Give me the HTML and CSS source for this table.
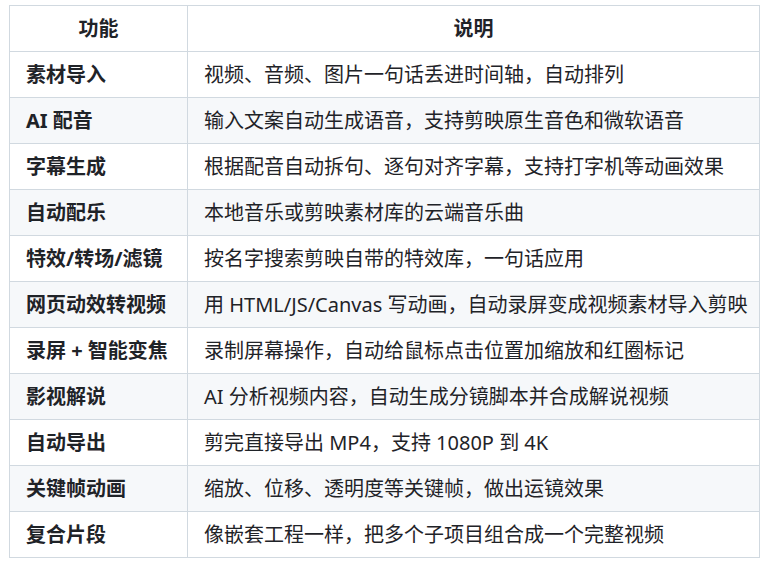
FILE: index.html
```html
<!DOCTYPE html>
<html lang="zh-CN">
<head>
<meta charset="utf-8">
<link rel="stylesheet" href="styles.css">
</head>
<body>
<table class="feature-table">
  <colgroup><col class="col-name"><col class="col-desc"></colgroup>
  <thead>
    <tr><th>功能</th><th>说明</th></tr>
  </thead>
  <tbody>
    <tr><td class="name">素材导入</td><td>视频、音频、图片一句话丢进时间轴，自动排列</td></tr>
    <tr><td class="name">AI 配音</td><td>输入文案自动生成语音，支持剪映原生音色和微软语音</td></tr>
    <tr><td class="name">字幕生成</td><td>根据配音自动拆句、逐句对齐字幕，支持打字机等动画效果</td></tr>
    <tr><td class="name">自动配乐</td><td>本地音乐或剪映素材库的云端音乐曲</td></tr>
    <tr><td class="name">特效/转场/滤镜</td><td>按名字搜索剪映自带的特效库，一句话应用</td></tr>
    <tr><td class="name">网页动效转视频</td><td>用 HTML/JS/Canvas 写动画，自动录屏变成视频素材导入剪映</td></tr>
    <tr><td class="name">录屏 + 智能变焦</td><td>录制屏幕操作，自动给鼠标点击位置加缩放和红圈标记</td></tr>
    <tr><td class="name">影视解说</td><td>AI 分析视频内容，自动生成分镜脚本并合成解说视频</td></tr>
    <tr><td class="name">自动导出</td><td>剪完直接导出 MP4，支持 1080P 到 4K</td></tr>
    <tr><td class="name">关键帧动画</td><td>缩放、位移、透明度等关键帧，做出运镜效果</td></tr>
    <tr><td class="name">复合片段</td><td>像嵌套工程一样，把多个子项目组合成一个完整视频</td></tr>
  </tbody>
</table>
</body>
</html>
```

FILE: styles.css
```css
html, body {
  margin: 0;
  background: #ffffff;
}
body {
  padding: 5px 9px;
  font-family: "Noto Sans", "Noto Sans CJK SC", sans-serif;
  font-size: 20px;
  color: #1f2328;
}
.feature-table {
  border-collapse: collapse;
  width: 751px;
  table-layout: fixed;
}
.col-name { width: 178px; }
.feature-table th,
.feature-table td {
  box-sizing: border-box;
  border: 1px solid #d1d9e0;
  height: 46px;
  padding: 0 16px;
  line-height: 1.5;
  vertical-align: middle;
  white-space: nowrap;
}
.feature-table th {
  font-weight: 700;
  text-align: center;
}
.feature-table td { text-align: left; }
.feature-table td.name { font-weight: 700; }
.feature-table tbody tr:nth-child(even) td { background: #f6f8fa; }
```
